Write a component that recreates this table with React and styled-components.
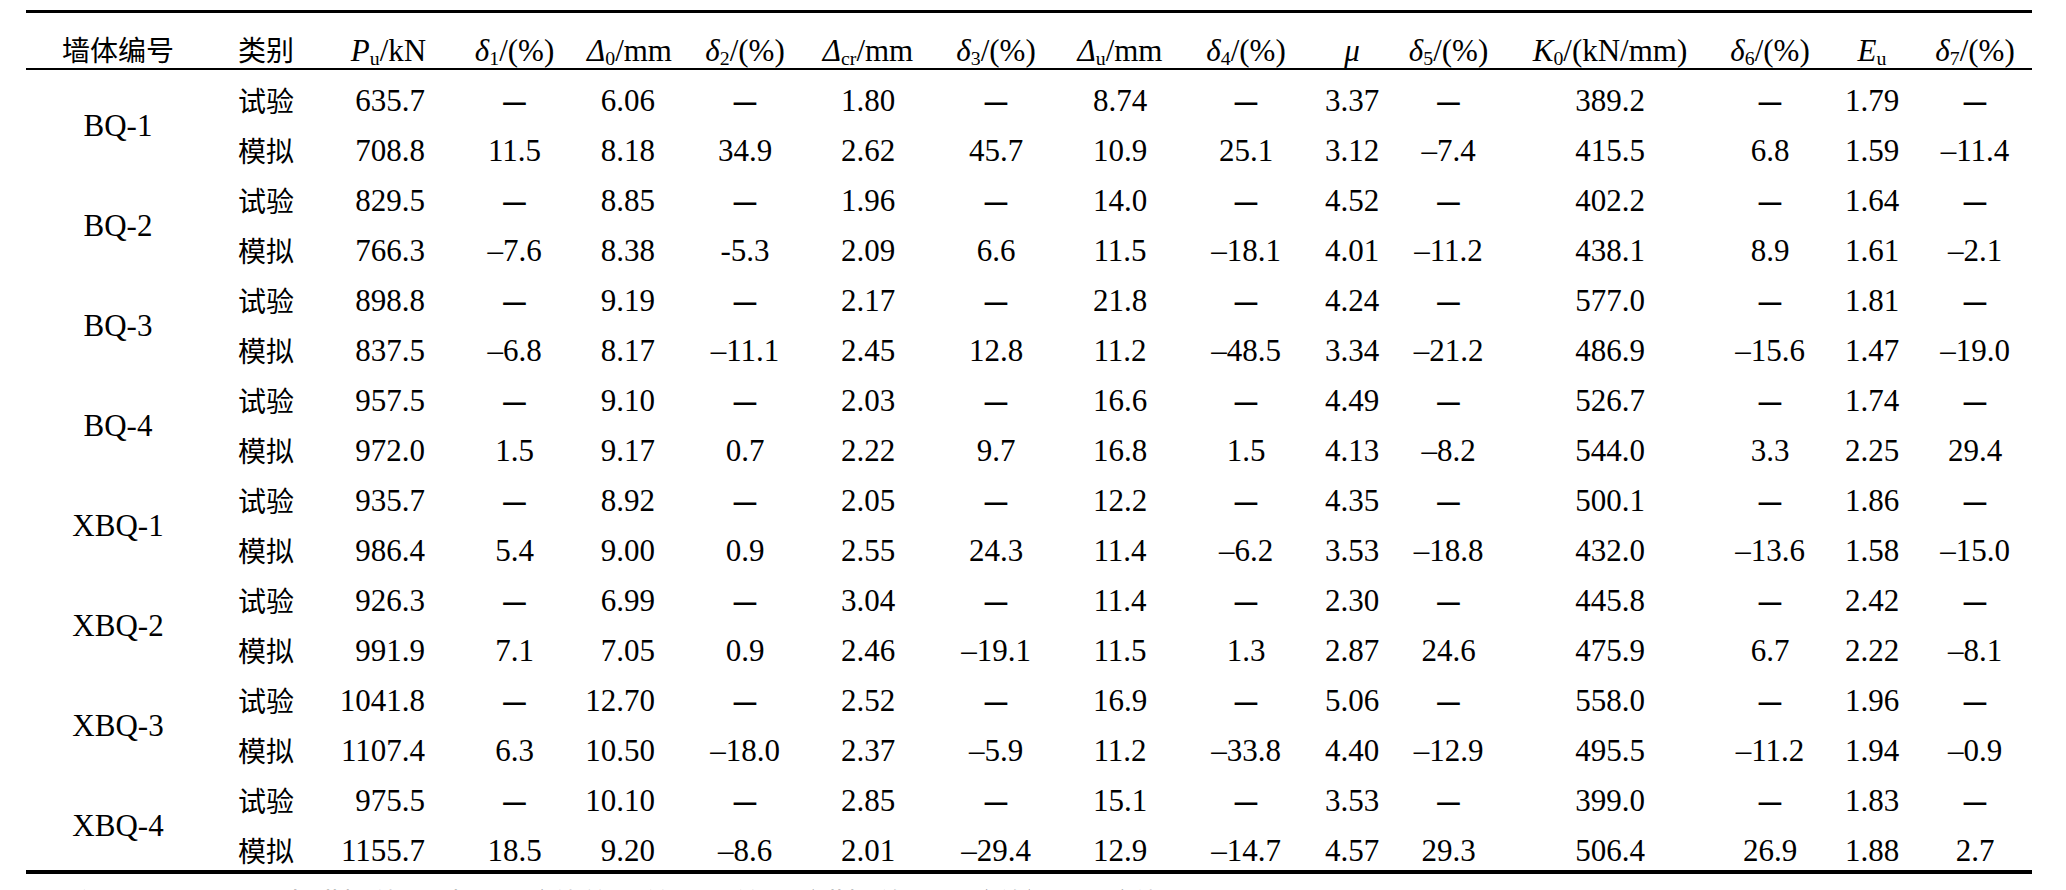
import React from "react";
import styled, { createGlobalStyle } from "styled-components";

// 表格：墙体试验值与模拟值对比
const GlobalStyle = createGlobalStyle`
  html, body {
    margin: 0;
    padding: 0;
    background: #fff;
  }
  body {
    font-family: "Liberation Serif", "Noto Sans CJK SC", serif;
    color: #000;
  }
`;

const Page = styled.div`
  padding: 10px 0 0 26px;
  width: 2006px;
  height: 880px;
  overflow: hidden;
`;

const Table = styled.table`
  width: 2006px;
  table-layout: fixed;
  border-collapse: separate;
  border-spacing: 0;
  border-top: 3px solid #000;
  border-bottom: 4px solid #000;
  font-size: 31px;
`;

const Col = styled.col`
  width: ${(p) => p.$w}px;
`;

const HeadCell = styled.th`
  box-sizing: border-box;
  height: 57px;
  padding: 20px 0 0;
  border-bottom: 2px solid #000;
  font-weight: normal;
  text-align: center;
  vertical-align: middle;
  line-height: 30px;
  white-space: nowrap;
`;

const Cell = styled.td`
  box-sizing: border-box;
  height: 50px;
  padding: 12px ${(p) => p.$pr || 0}px 0 0;
  text-align: ${(p) => p.$align || "center"};
  vertical-align: middle;
  line-height: 30px;
  white-space: nowrap;
`;

const Han = styled.span`
  font-family: "Noto Sans CJK SC", sans-serif;
  font-size: 28px;
  line-height: 28px;
`;

const Var = styled.i`
  font-style: italic;
`;

const Sub = styled.sub`
  font-size: 0.64em;
  vertical-align: -0.2em;
  line-height: 0;
  font-style: normal;
`;

const Dash = styled.span`
  font-family: "Noto Sans CJK SC", sans-serif;
  font-weight: 700;
  font-size: 28px;
  line-height: 28px;
`;

const Note = styled.p`
  margin: 13px 0 0 40px;
  font-size: 30px;
  line-height: 36px;
  white-space: nowrap;
`;

const widths = [184, 112, 133, 119, 111, 120, 126, 130, 118, 134, 78, 115, 208, 112, 92, 114];

// 数据列中右对齐的列（下标相对“类别”之后）及其右内边距
const rightCols = { 0: 30, 2: 30 };

const groups = [
  ["BQ-1", [
    ["试验", "635.7", "—", "6.06", "—", "1.80", "—", "8.74", "—", "3.37", "—", "389.2", "—", "1.79", "—"],
    ["模拟", "708.8", "11.5", "8.18", "34.9", "2.62", "45.7", "10.9", "25.1", "3.12", "–7.4", "415.5", "6.8", "1.59", "–11.4"],
  ]],
  ["BQ-2", [
    ["试验", "829.5", "—", "8.85", "—", "1.96", "—", "14.0", "—", "4.52", "—", "402.2", "—", "1.64", "—"],
    ["模拟", "766.3", "–7.6", "8.38", "-5.3", "2.09", "6.6", "11.5", "–18.1", "4.01", "–11.2", "438.1", "8.9", "1.61", "–2.1"],
  ]],
  ["BQ-3", [
    ["试验", "898.8", "—", "9.19", "—", "2.17", "—", "21.8", "—", "4.24", "—", "577.0", "—", "1.81", "—"],
    ["模拟", "837.5", "–6.8", "8.17", "–11.1", "2.45", "12.8", "11.2", "–48.5", "3.34", "–21.2", "486.9", "–15.6", "1.47", "–19.0"],
  ]],
  ["BQ-4", [
    ["试验", "957.5", "—", "9.10", "—", "2.03", "—", "16.6", "—", "4.49", "—", "526.7", "—", "1.74", "—"],
    ["模拟", "972.0", "1.5", "9.17", "0.7", "2.22", "9.7", "16.8", "1.5", "4.13", "–8.2", "544.0", "3.3", "2.25", "29.4"],
  ]],
  ["XBQ-1", [
    ["试验", "935.7", "—", "8.92", "—", "2.05", "—", "12.2", "—", "4.35", "—", "500.1", "—", "1.86", "—"],
    ["模拟", "986.4", "5.4", "9.00", "0.9", "2.55", "24.3", "11.4", "–6.2", "3.53", "–18.8", "432.0", "–13.6", "1.58", "–15.0"],
  ]],
  ["XBQ-2", [
    ["试验", "926.3", "—", "6.99", "—", "3.04", "—", "11.4", "—", "2.30", "—", "445.8", "—", "2.42", "—"],
    ["模拟", "991.9", "7.1", "7.05", "0.9", "2.46", "–19.1", "11.5", "1.3", "2.87", "24.6", "475.9", "6.7", "2.22", "–8.1"],
  ]],
  ["XBQ-3", [
    ["试验", "1041.8", "—", "12.70", "—", "2.52", "—", "16.9", "—", "5.06", "—", "558.0", "—", "1.96", "—"],
    ["模拟", "1107.4", "6.3", "10.50", "–18.0", "2.37", "–5.9", "11.2", "–33.8", "4.40", "–12.9", "495.5", "–11.2", "1.94", "–0.9"],
  ]],
  ["XBQ-4", [
    ["试验", "975.5", "—", "10.10", "—", "2.85", "—", "15.1", "—", "3.53", "—", "399.0", "—", "1.83", "—"],
    ["模拟", "1155.7", "18.5", "9.20", "–8.6", "2.01", "–29.4", "12.9", "–14.7", "4.57", "29.3", "506.4", "26.9", "1.88", "2.7"],
  ]],
];

function Value({ v }) {
  if (v === "—") return <Dash>—</Dash>;
  return v;
}

function Header() {
  return (
    <thead>
      <tr>
        <HeadCell><Han>墙体编号</Han></HeadCell>
        <HeadCell><Han>类别</Han></HeadCell>
        <HeadCell><Var>P</Var><Sub>u</Sub>/kN</HeadCell>
        <HeadCell><Var>δ</Var><Sub>1</Sub>/(%)</HeadCell>
        <HeadCell><Var>Δ</Var><Sub>0</Sub>/mm</HeadCell>
        <HeadCell><Var>δ</Var><Sub>2</Sub>/(%)</HeadCell>
        <HeadCell><Var>Δ</Var><Sub>cr</Sub>/mm</HeadCell>
        <HeadCell><Var>δ</Var><Sub>3</Sub>/(%)</HeadCell>
        <HeadCell><Var>Δ</Var><Sub>u</Sub>/mm</HeadCell>
        <HeadCell><Var>δ</Var><Sub>4</Sub>/(%)</HeadCell>
        <HeadCell><Var>μ</Var></HeadCell>
        <HeadCell><Var>δ</Var><Sub>5</Sub>/(%)</HeadCell>
        <HeadCell><Var>K</Var><Sub>0</Sub>/(kN/mm)</HeadCell>
        <HeadCell><Var>δ</Var><Sub>6</Sub>/(%)</HeadCell>
        <HeadCell><Var>E</Var><Sub>u</Sub></HeadCell>
        <HeadCell><Var>δ</Var><Sub>7</Sub>/(%)</HeadCell>
      </tr>
    </thead>
  );
}

export default function App() {
  return (
    <Page>
      <GlobalStyle />
      <Table>
        <colgroup>
          {widths.map((w, i) => (
            <Col key={i} $w={w} />
          ))}
        </colgroup>
        <Header />
        <tbody>
          {groups.map(([name, rows]) =>
            rows.map((row, ri) => (
              <tr key={name + ri}>
                {ri === 0 && <Cell rowSpan={2}>{name}</Cell>}
                <Cell>
                  <Han>{row[0]}</Han>
                </Cell>
                {row.slice(1).map((v, ci) => (
                  <Cell
                    key={ci}
                    $align={rightCols[ci] ? "right" : "center"}
                    $pr={rightCols[ci]}
                  >
                    <Value v={v} />
                  </Cell>
                ))}
              </tr>
            ))
          )}
        </tbody>
      </Table>
      <Note>注：δ1～δ7 分别为模拟值相对于试验值的误差，误差 =（模拟值－试验值）/ 试验值 × 100%。</Note>
    </Page>
  );
}
